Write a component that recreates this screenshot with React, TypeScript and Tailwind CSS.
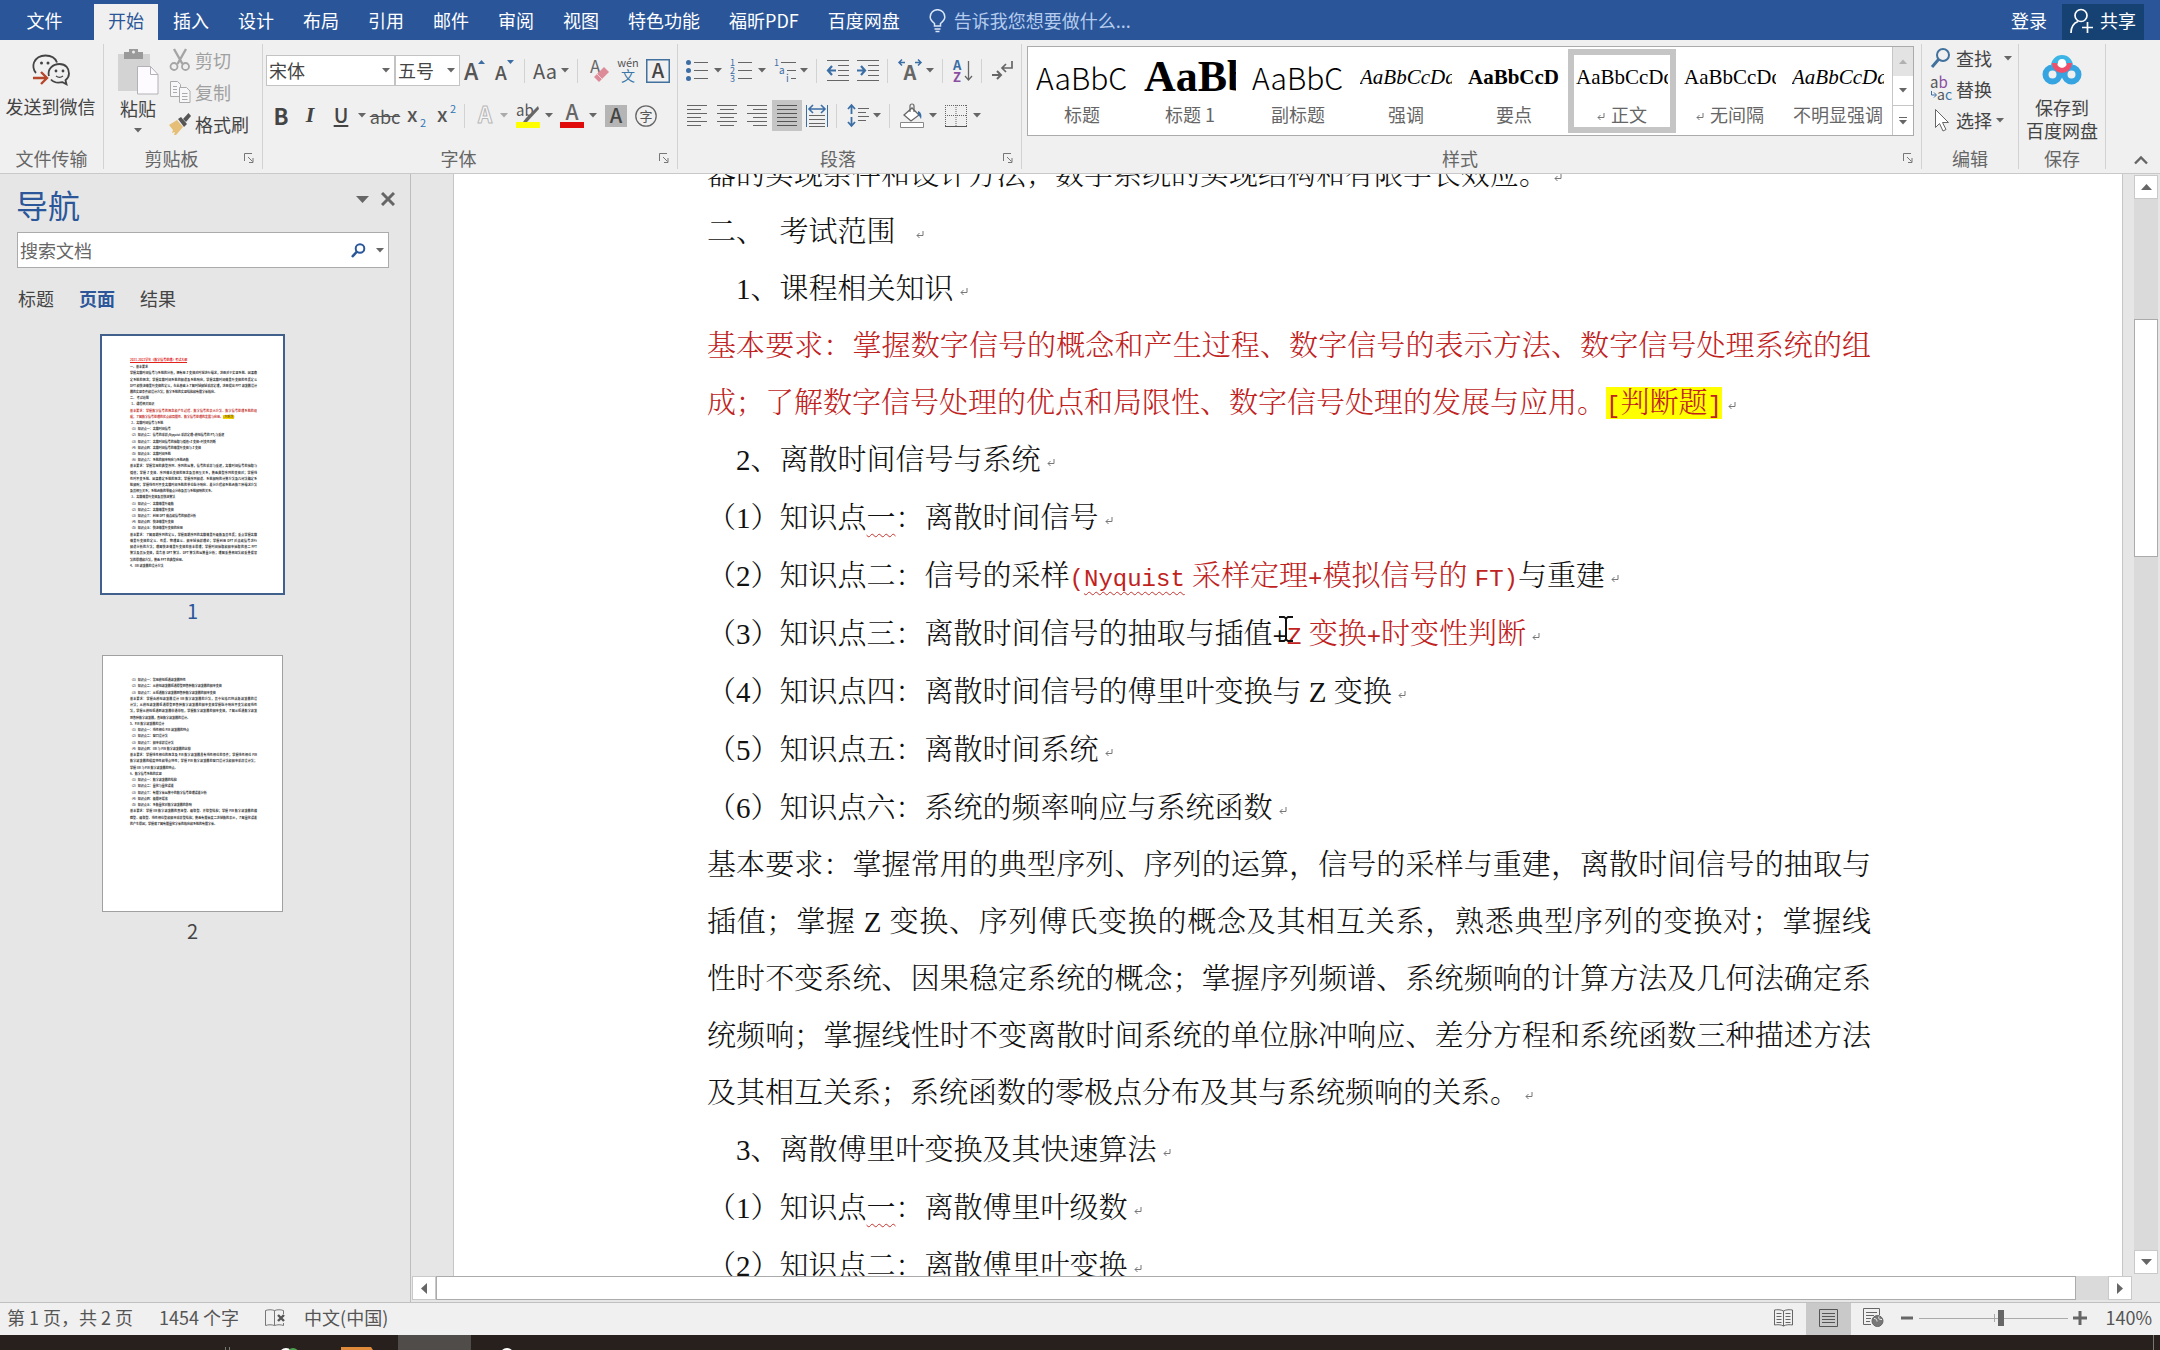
import React from "react";
import clsx from "clsx";

const tabs = ["插入", "设计", "布局", "引用", "邮件", "审阅", "视图", "特色功能", "福昕PDF", "百度网盘"];

const styleItems = [
  { name: "标题", sample: "AaBbC", cls: "text-[30px] font-light", mark: false },
  { name: "标题 1", sample: "AaBbC", cls: "text-[44px] font-bold font-['Liberation_Serif',serif]", mark: false },
  { name: "副标题", sample: "AaBbC", cls: "text-[30px] font-light", mark: false },
  { name: "强调", sample: "AaBbCcDd", cls: "text-[21px] italic text-[#333] font-['Liberation_Serif',serif]", mark: false },
  { name: "要点", sample: "AaBbCcD", cls: "text-[21px] font-bold font-['Liberation_Serif',serif]", mark: false },
  { name: "正文", sample: "AaBbCcDd", cls: "text-[21px] font-['Liberation_Serif',serif]", mark: true },
  { name: "无间隔", sample: "AaBbCcDd", cls: "text-[21px] font-['Liberation_Serif',serif]", mark: true },
  { name: "不明显强调", sample: "AaBbCcDd", cls: "text-[21px] italic text-[#555] font-['Liberation_Serif',serif]", mark: false },
];

type MiniLine = { t: string; full?: boolean; red?: boolean; title?: boolean; hl?: string };

const pageOne: MiniLine[] = [
  { t: "2021-2022学年《数字信号处理》考试大纲", title: true },
  { t: "一、基本要求" },
  { t: "掌握离散时间信号与系统的分析，拥有用 Z 变换对时域进行描述，进而对于实现系统、因果稳", full: true },
  { t: "定系统的概念；掌握离散时间系统的频谱及系统响应，掌握离散时间傅里叶变换的性质定义", full: true },
  { t: "DFT 和快速傅里叶变换的定义，在此基础上了解时域频域采样定理，进而提出 FFT 滤波器设计", full: true },
  { t: "器的实现条件和设计方法；数字系统的实现结构和有限字长效应。" },
  { t: "二、 考试范围" },
  { t: "  1、课程相关知识" },
  { t: "基本要求：掌握数字信号的概念和产生过程、数字信号的表示方法、数字信号处理系统的组", full: true, red: true },
  { t: "成；了解数字信号处理的优点和局限性、数字信号处理的发展与应用。", red: true, hl: "[判断题]" },
  { t: "  2、离散时间信号与系统" },
  { t: "（1）知识点一：离散时间信号" },
  { t: "（2）知识点二：信号的采样(Nyquist 采样定理+模拟信号的 FT)与重建" },
  { t: "（3）知识点三：离散时间信号的抽取与插值+Z 变换+时变性判断" },
  { t: "（4）知识点四：离散时间信号的傅里叶变换与 Z 变换" },
  { t: "（5）知识点五：离散时间系统" },
  { t: "（6）知识点六：系统的频率响应与系统函数" },
  { t: "基本要求：掌握常用的典型序列、序列的运算，信号的采样与重建，离散时间信号的抽取与", full: true },
  { t: "插值；掌握 Z 变换、序列傅氏变换的概念及其相互关系，熟悉典型序列的变换对；掌握线", full: true },
  { t: "性时不变系统、因果稳定系统的概念；掌握序列频谱、系统频响的计算方法及几何法确定系", full: true },
  { t: "统频响；掌握线性时不变离散时间系统的单位脉冲响应、差分方程和系统函数三种描述方法", full: true },
  { t: "及其相互关系；系统函数的零极点分布及其与系统频响的关系。" },
  { t: "  3、离散傅里叶变换及其快速算法" },
  { t: "（1）知识点一：离散傅里叶级数" },
  { t: "（2）知识点二：离散傅里叶变换" },
  { t: "（3）知识点三：利用 DFT 做连续信号的频谱分析" },
  { t: "（4）知识点四：快速傅里叶变换" },
  { t: "（5）知识点五：快速傅里叶变换的应用" },
  { t: "基本要求：了解周期序列的定义，掌握周期序列的离散傅里叶级数及其性质；重点掌握离散", full: true },
  { t: "傅里叶变换的定义、性质、物理意义、频率域抽样理论；掌握利用 DFT 对连续信号进行", full: true },
  { t: "频谱分析的方法；理解快速傅里叶变换的基本原理；掌握时间抽取和频率抽取的基二 FFT", full: true },
  { t: "算法及其反变换，混合基 DFT 算法、DFT 算法的运算量分析；理解重叠相加法和重叠保留", full: true },
  { t: "法的原理和方法，熟悉 FFT 的典型应用。" },
  { t: "4、IIR 滤波器的设计方法" },
];

const pageTwo: MiniLine[] = [
  { t: "（1）知识点一：常用模拟低通滤波器特性" },
  { t: "（2）知识点二：从模拟滤波器低通原型到各种数字滤波器的频率变换" },
  { t: "（3）知识点三：从低通数字滤波器到各种数字滤波器的频率变换" },
  { t: "基本要求：掌握由模拟滤波器设计 IIR 数字滤波器的方法，其中包括巴特沃斯滤波器的设", full: true },
  { t: "计法；从模拟滤波器低通原型到各种数字滤波器的频率变换掌握脉冲响应不变法和双线性", full: true },
  { t: "法，掌握从模拟低通到滤波器带通带阻，掌握数字滤波器的频率变换，了解从低通数字滤波", full: true },
  { t: "到各种数字滤波器，直接数字滤波器的设计。" },
  { t: "5、FIR 数字滤波器的设计" },
  { t: "（1）知识点一：线性相位 FIR 滤波器的特点" },
  { t: "（2）知识点二：窗口设计法" },
  { t: "（3）知识点三：频率采样设计法" },
  { t: "（4）知识点四：IIR 与 FIR 数字滤波器的比较" },
  { t: "基本要求：掌握线性相位的概念及 FIR 数字滤波器具有线性相位的条件；掌握线性相位 FIR", full: true },
  { t: "数字滤波器的幅度特性和零点特性；掌握 FIR 数字滤波器的窗口设计法和频率采样设计法；", full: true },
  { t: "掌握 IIR 与 FIR 数字滤波器的特点。" },
  { t: "6、数字信号系统的实现" },
  { t: "（1）知识点一：数字滤波器的结构" },
  { t: "（2）知识点二：量化与量化误差" },
  { t: "（3）知识点三：有限字长运算中的数字信号处理误差分析" },
  { t: "（4）知识点四：极限环振荡" },
  { t: "（5）知识点五：系数量化对数字滤波器的影响" },
  { t: "基本要求：掌握 IIR 数字滤波器的直接型、级联型、并联型结构；掌握 FIR 数字滤波器的横", full: true },
  { t: "截型、级联型、线性相位型和频率采样型结构；熟悉有限长度二进制数的表示，了解量化误差", full: true },
  { t: "的产生原因；掌握或了解有限量化字长的效应和系统的有限字长。" },
];

/* ---------- small shared parts ---------- */

const Arrow = ({ className }: { className?: string }) => (
  <svg width="8" height="5" viewBox="0 0 8 5" className={clsx("shrink-0", className)}>
    <path d="M0 0h8L4 4.6z" fill="#666" />
  </svg>
);

const Sep = ({ className }: { className?: string }) => (
  <div className={clsx("w-px h-6 shrink-0 bg-[#d2d2d2]", className)} />
);

const Divider = () => <div className="w-px shrink-0 mb-1 bg-[#d2d2d2]" />;

const IconButton = ({
  label,
  w = 22,
  className,
  children,
}: {
  label: string;
  w?: number;
  className?: string;
  children: React.ReactNode;
}) => (
  <button aria-label={label} className={clsx("shrink-0 flex items-center justify-center", className)}>
    <svg width={w} height="24" viewBox={`0 0 ${w} 24`} fill="none" className="overflow-visible">
      {children}
    </svg>
  </button>
);

const Lines = ({ rows, color = "#666" }: { rows: number[][]; color?: string }) => (
  <>
    {rows.map(([x1, x2, y], i) => (
      <path key={i} d={`M${x1} ${y + 0.5}H${x2}`} stroke={color} />
    ))}
  </>
);

const Launcher = ({ label }: { label: string }) => (
  <button aria-label={label} className="mr-2 shrink-0">
    <svg width="10" height="10" viewBox="0 0 10 10" fill="none" stroke="#777">
      <path d="M.5 8V.5H8M4 4l4.500 4.500M9 5v4.500H5" />
    </svg>
  </button>
);

const Group = ({
  label,
  launcher,
  className,
  children,
}: {
  label: string;
  launcher?: boolean;
  className?: string;
  children: React.ReactNode;
}) => (
  <section className={clsx("shrink-0 flex flex-col", className)}>
    <div className="flex-1">{children}</div>
    <div className="h-[27px] pb-[3px] flex items-center">
      <span className={clsx("flex-1 text-center leading-6 text-[#666]", launcher && "pr-[5px]")}>{label}</span>
      {launcher && <Launcher label={`${label}设置`} />}
    </div>
  </section>
);

const Return = ({ className }: { className?: string }) => (
  <svg width="8" height="8" viewBox="0 0 8 8" fill="none" stroke="#777" className={clsx("inline-block", className)}>
    <path d="M7 0v4.500H1M3.500 2L1 4.500 3.500 7" />
  </svg>
);

/* ---------- title tabs ---------- */

const TabBar = () => (
  <header className="h-10 shrink-0 bg-[#2a5699] flex items-end gap-px text-white">
    <button className="w-[93px] h-9 pr-1 pb-[3px]">文件</button>
    <button className="h-9 px-[14px] pb-[3px] bg-[#f0f0f0] text-[#2a5699]">开始</button>
    {tabs.map((t) => (
      <button key={t} className="h-9 px-[14px] pb-[3px]">
        {t}
      </button>
    ))}
    <label className="h-9 flex-1 pl-[14px] pb-[3px] flex items-center gap-2 text-[#b4cbee]">
      <svg width="17" height="24" viewBox="0 0 17 24" fill="none" stroke="#dbe7f8" strokeWidth="1.500">
        <path d="M5.500 17v-2.500C3 12.500 1.200 10.800 1.200 8a7.300 7.300 0 0 1 14.600 0c0 2.800-1.800 4.500-4.300 6.500V17zM5.500 20h6M6.500 22.500h4" />
      </svg>
      <input
        placeholder="告诉我您想要做什么..."
        className="flex-1 bg-transparent outline-none placeholder:text-[#b4cbee]"
      />
    </label>
    <button className="h-9 px-[14px] pb-[3px]">登录</button>
    <button className="h-9 w-[82px] mr-4 pb-[3px] bg-[#154273] flex items-center justify-center gap-[7px]">
      <svg width="23" height="26" viewBox="0 0 23 26" fill="none" stroke="#fff" strokeWidth="1.700">
        <circle cx="11" cy="7.500" r="6" />
        <path d="M1 25c0-6 3-10 7-11.500M17.500 14v11M12 19.500h11" />
      </svg>
      共享
    </button>
  </header>
);

/* ---------- ribbon ---------- */

const TransferGroup = () => (
  <Group label="文件传输" className="w-[103px]">
    <button className="w-full flex flex-col items-center gap-2 pt-[10px] pr-0.5">
      <svg width="38" height="32" viewBox="0 0 38 32" fill="none" stroke="#444" strokeWidth="1.800">
        <path d="M4 19C1 16 1 11 2 8.500 4 4 8.500 1.500 13.500 1.500c6 0 10 3 11.500 7" />
        <path d="M17 22c-2-7 4-12 10.500-12S37 14.500 37 19.500c0 3-1.500 5-3.500 6.700l1 4-4-2c-5 1-9 .3-11.500-2.700" />
        <path d="M1 24h13M9 18l6 6-6 6" stroke="#b7472a" strokeWidth="2.400" />
        <g fill="#444" stroke="none">
          <circle cx="9.500" cy="9" r="1.500" />
          <circle cx="16" cy="9" r="1.500" />
          <circle cx="24" cy="17" r="1.400" />
          <circle cx="31" cy="17" r="1.400" />
        </g>
        <path d="M24 22c2 1.500 5 1.500 7 0" strokeWidth="1.200" />
      </svg>
      <span className="leading-6 text-[#444]">发送到微信</span>
    </button>
  </Group>
);

const ClipboardGroup = () => (
  <Group label="剪贴板" launcher className="w-[158px]">
    <div className="flex">
      <button className="ml-3 w-[44px] flex flex-col items-center pt-1">
        <svg width="42" height="48" viewBox="0 0 42 48" fill="none">
          <path d="M1 6h32v37H1z" fill="#d3d3d3" />
          <path d="M7 4h5V1h9v3h5v7H7z" fill="#9a9a9a" />
          <circle cx="16.500" cy="4" r="1.500" fill="#eee" />
          <path d="M20.500 18.500h13l7.500 8V46H20.500z" fill="#fdfbff" stroke="#b3b0b6" />
          <path d="M33.500 18.500v8H41" stroke="#b3b0b6" />
        </svg>
        <span className="leading-6 text-[#444]">粘贴</span>
        <Arrow className="mt-2" />
      </button>
      <div className="ml-[9px] flex flex-col">
        <button className="h-8 flex items-center gap-1 text-[#a0a0a0]">
          <svg width="22" height="24" viewBox="0 0 22 24" fill="none" stroke="#a5a5a5">
            <path d="M5 1l8.500 15M17 1L8.500 16" strokeWidth="2.400" />
            <circle cx="5" cy="18.500" r="3.500" strokeWidth="1.800" />
            <circle cx="16.500" cy="18.500" r="3.500" strokeWidth="1.800" />
          </svg>
          剪切
        </button>
        <button className="h-8 flex items-center gap-1 text-[#a0a0a0]">
          <svg width="22" height="24" viewBox="0 0 22 24" fill="#f7f7f9" stroke="#aaa">
            <path d="M1.500 1.500h7l3 3v12h-10zM4 6.500h4M4 9.500h4M4 12.500h4" />
            <path d="M10.500 7.500h7l3.500 3.500v11.500H10.500zM13 13.500h5.500M13 16.500h5.500M13 19.500h5.500" />
          </svg>
          复制
        </button>
        <button className="h-8 flex items-center gap-1 text-[#444]">
          <svg width="22" height="24" viewBox="0 0 22 24">
            <path d="M0 13l8-5 6 7-7 8H5l1-3-3 1 1-3z" fill="#e5bf78" />
            <path d="M9 7l3-2 6 7-3 3z" fill="#555" />
            <path d="M14 7l5.500-6L22 4l-5 6z" fill="#555" />
          </svg>
          格式刷
        </button>
      </div>
    </div>
  </Group>
);

const Combo = ({ label, value, className }: { label: string; value: string; className: string }) => (
  <div className={clsx("relative h-[31px] shrink-0", className)}>
    <select
      aria-label={label}
      defaultValue={value}
      className="appearance-none w-full h-full pl-[2px] bg-white border border-[#c3c3c3] text-[#444] leading-[27px]"
    >
      <option>{value}</option>
    </select>
    <Arrow className="absolute right-[5px] top-[13px] pointer-events-none" />
  </div>
);

const FontGroup = () => (
  <Group label="字体" launcher className="w-[414px]">
    <div className="pt-[11px] pl-[3px] flex flex-col gap-[14px]">
      <div className="h-[31px] flex items-center">
        <Combo label="字体" value="宋体" className="w-[129px]" />
        <Combo label="字号" value="五号" className="w-[65px]" />
        <IconButton label="增大字号" className="ml-1" w={24}>
          <text x="0" y="21" fontSize="23" fontWeight="500" fill="#555">A</text>
          <path d="M14 5l3.500-4L21 5z" fill="#3b6ea5" />
        </IconButton>
        <IconButton label="减小字号" className="ml-[6px]" w={24}>
          <text x="1" y="21" fontSize="19" fontWeight="500" fill="#555">A</text>
          <path d="M13 1l3.500 4L20 1z" fill="#3b6ea5" />
        </IconButton>
        <Sep className="ml-[6px]" />
        <button aria-label="更改大小写" className="ml-2 w-6 text-[20px] leading-6 text-[#555] flex justify-center">
          Aa
        </button>
        <Arrow className="ml-1" />
        <Sep className="ml-2" />
        <IconButton label="清除格式" className="ml-3" w={20}>
          <text x="0" y="14" fontSize="17" fill="#666">A</text>
          <path d="M4 18L14 8l5 5L9 23z" fill="#dd8a99" />
          <path d="M7 15l5 5" stroke="#f3d3d9" />
        </IconButton>
        <IconButton label="拼音指南" className="ml-2" w={20}>
          <text x="10" y="8" fontSize="11" textAnchor="middle" fill="#555">wén</text>
          <text x="10" y="22" fontSize="14" textAnchor="middle" fill="#3b78a8">文</text>
        </IconButton>
        <IconButton label="字符边框" className="ml-2" w={24}>
          <path d="M.75 .75h22.500v22.500H.75z" stroke="#41719c" strokeWidth="1.500" />
          <text x="12" y="19" fontSize="20" fontWeight="500" textAnchor="middle" fill="#444">A</text>
        </IconButton>
      </div>
      <div className="h-[31px] flex items-center text-[#444]">
        <button className="w-[30px] pb-0.5 text-[22px] leading-6 font-bold">B</button>
        <button className="w-7 pb-0.5 text-[22px] leading-6 font-bold italic font-['Liberation_Serif',serif]">I</button>
        <button className="ml-1 w-[26px] pb-0.5 text-[20px] leading-6 font-medium underline underline-offset-2">U</button>
        <Arrow className="ml-1" />
        <button className="ml-[7px] w-6 flex justify-center leading-6 line-through text-[#555]">abc</button>
        <IconButton label="下标" className="ml-[10px]" w={20}>
          <text x="0" y="18" fontSize="20" fontWeight="500" fill="#555">x</text>
          <text x="13" y="23" fontSize="11" fill="#2e75b6">2</text>
        </IconButton>
        <IconButton label="上标" className="ml-[10px]" w={20}>
          <text x="0" y="18" fontSize="20" fontWeight="500" fill="#555">x</text>
          <text x="13" y="9" fontSize="11" fill="#2e75b6">2</text>
        </IconButton>
        <Sep className="ml-[7px]" />
        <IconButton label="文本效果" className="ml-[11px]" w={18}>
          <text x="9" y="19" fontSize="22" fontWeight="700" textAnchor="middle" fill="#f6f6f6" stroke="#b8b8b8">A</text>
        </IconButton>
        <Arrow className="ml-[6px] opacity-50" />
        <IconButton label="突出显示" className="ml-2" w={24}>
          <text x="0" y="12" fontSize="15" fill="#555">ab</text>
          <path d="M22 2l-12 12-3 4h4L23 5z" fill="#666" />
          <path d="M0 18h24v6H0z" fill="#ffff00" />
        </IconButton>
        <Arrow className="ml-[5px]" />
        <IconButton label="字体颜色" className="ml-[7px]" w={24}>
          <text x="12" y="16" fontSize="21" fontWeight="500" textAnchor="middle" fill="#666">A</text>
          <path d="M0 18h24v6H0z" fill="#e00b0b" />
        </IconButton>
        <Arrow className="ml-[5px]" />
        <IconButton label="字符底纹" className="ml-2" w={22}>
          <path d="M0 1h22v22H0z" fill="#b5b5b5" />
          <text x="11" y="19" fontSize="20" fontWeight="500" textAnchor="middle" fill="#444">A</text>
        </IconButton>
        <IconButton label="带圈字符" className="ml-2">
          <circle cx="11" cy="12" r="10.200" stroke="#666" strokeWidth="1.300" />
          <text x="11" y="17" fontSize="13" textAnchor="middle" fill="#555">字</text>
        </IconButton>
      </div>
    </div>
  </Group>
);

const ParagraphGroup = () => (
  <Group label="段落" launcher className="w-[343px]">
    <div className="pt-[11px] pl-2 flex flex-col gap-[14px]">
      <div className="h-[31px] flex items-center">
        <IconButton label="项目符号">
          {[3, 11, 19].map((y) => (
            <circle key={y} cx="2.500" cy={y + 0.5} r="2.500" fill="#3b6ea5" />
          ))}
          <Lines rows={[[8, 22, 3], [8, 22, 11], [8, 22, 19]]} />
        </IconButton>
        <Arrow className="ml-[6px]" />
        <IconButton label="编号" className="ml-2">
          {[1, 2, 3].map((n) => (
            <text key={n} x="0" y={n * 8 - 1} fontSize="9" fill="#3b6ea5">{n}</text>
          ))}
          <Lines rows={[[8, 22, 3], [8, 22, 11], [8, 22, 19]]} />
        </IconButton>
        <Arrow className="ml-[6px]" />
        <IconButton label="多级列表" className="ml-2">
          <text x="0" y="7" fontSize="9" fill="#3b6ea5">1</text>
          <text x="5" y="15" fontSize="10" fill="#3b6ea5">a</text>
          <text x="12" y="23" fontSize="10" fill="#3b6ea5">i</text>
          <Lines rows={[[7, 22, 3], [13, 22, 11], [17, 22, 19]]} />
        </IconButton>
        <Arrow className="ml-1" />
        <Sep className="ml-2" />
        <IconButton label="减少缩进" className="ml-[10px]">
          <Lines rows={[[0, 22, 1], [11, 22, 6], [11, 22, 11], [11, 22, 16], [0, 22, 21]]} />
          <path d="M9 11.500H1M5 7l-4 4.500L5 16" stroke="#3b6ea5" strokeWidth="2.200" />
        </IconButton>
        <IconButton label="增加缩进" className="ml-2">
          <Lines rows={[[0, 22, 1], [11, 22, 6], [11, 22, 11], [11, 22, 16], [0, 22, 21]]} />
          <path d="M0 11.500h8M4 7l4 4.500L4 16" stroke="#3b6ea5" strokeWidth="2.200" />
        </IconButton>
        <Sep className="ml-2" />
        <IconButton label="中文版式" className="ml-[10px]" w={24}>
          <text x="12" y="21" fontSize="20" fontWeight="700" textAnchor="middle" fill="#666">A</text>
          <path d="M7 3.500H1M4 .5l-3 3 3 3M17 3.500h6M20 .5l3 3-3 3" stroke="#3b6ea5" strokeWidth="1.500" />
        </IconButton>
        <Arrow className="ml-1" />
        <Sep className="ml-2" />
        <IconButton label="排序" className="ml-[10px]" w={20}>
          <text x="0" y="11" fontSize="13" fontWeight="700" fill="#3b6ea5">A</text>
          <text x="0" y="23" fontSize="13" fontWeight="700" fill="#8a4fa0">Z</text>
          <path d="M15.500 2v19M12 17l3.500 4 3.500-4" stroke="#666" strokeWidth="1.300" />
        </IconButton>
        <Sep className="ml-2" />
        <IconButton label="显示编辑标记" className="ml-[10px]">
          <path d="M20 2v7h-9M14 5l-4 4 4 4" stroke="#666" strokeWidth="1.700" />
          <path d="M0 16h9M5 12l4 4-4 4" stroke="#666" strokeWidth="2" />
        </IconButton>
      </div>
      <div className="h-[31px] flex items-center">
        <IconButton label="左对齐">
          <Lines rows={[[1, 21, 1], [1, 15, 5], [1, 21, 9], [1, 15, 13], [1, 21, 17], [1, 15, 21]]} />
        </IconButton>
        <IconButton label="居中" className="ml-2">
          <Lines rows={[[1, 21, 1], [4, 18, 5], [1, 21, 9], [4, 18, 13], [1, 21, 17], [4, 18, 21]]} />
        </IconButton>
        <IconButton label="右对齐" className="ml-2">
          <Lines rows={[[1, 21, 1], [7, 21, 5], [1, 21, 9], [7, 21, 13], [1, 21, 17], [7, 21, 21]]} />
        </IconButton>
        <IconButton label="两端对齐" className="ml-1 w-[30px] h-[31px] bg-[#c5c5c5]">
          <Lines
            rows={[[1, 21, 1], [1, 21, 5], [1, 21, 9], [1, 21, 13], [1, 21, 17], [1, 21, 21]]}
            color="#555"
          />
        </IconButton>
        <IconButton label="分散对齐" className="ml-1">
          <path d="M.5 1v22M21.500 1v22" stroke="#3b6ea5" />
          <path d="M3 5h16M7 1L3 5l4 4M15 1l4 4-4 4" stroke="#3b6ea5" strokeWidth="1.600" />
          <Lines rows={[[3, 19, 11], [3, 19, 15], [3, 19, 19], [3, 19, 22]]} />
        </IconButton>
        <Sep className="ml-2" />
        <IconButton label="行距" className="ml-[10px]">
          <path d="M4.500 1v9M1 5l3.500-4L8 5M4.500 13v9M1 18l3.500 4L8 18" stroke="#3b6ea5" strokeWidth="1.800" />
          <Lines rows={[[11, 22, 4], [11, 19, 8], [11, 22, 12], [11, 19, 16]]} />
        </IconButton>
        <Arrow className="ml-1" />
        <Sep className="ml-2" />
        <IconButton label="底纹" className="ml-[10px]" w={24}>
          <path d="M4 11l8-7 7 7-8 6z" fill="#fff" stroke="#666" strokeWidth="1.300" />
          <path d="M10 8V2a2 2 0 0 1 4 0v6" stroke="#666" strokeWidth="1.200" />
          <path d="M18 7c3 1 4 4 3 8l-3-5z" fill="#3b6ea5" />
          <path d="M.5 18.500h23v5H.5z" fill="#fff" stroke="#888" />
        </IconButton>
        <Arrow className="ml-[5px]" />
        <IconButton label="边框" className="ml-2">
          <path d="M.5 1v21M21.500 1v21M11 1v21M0 1.500h22M0 11.500h22" stroke="#666" strokeDasharray="1 1" />
          <path d="M0 22.500h22" stroke="#555" />
        </IconButton>
        <Arrow className="ml-[6px]" />
      </div>
    </div>
  </Group>
);

const StylesGroup = () => (
  <Group label="样式" launcher className="flex-1">
    <div className="mt-0.5 ml-[5px] mr-[7px] h-[90px] flex border border-[#ababab] bg-white">
      {styleItems.map((s, i) => (
        <button
          key={s.name}
          className={clsx(
            "flex-1 my-0.5 overflow-hidden border-[6px] flex flex-col items-center",
            i === 5 ? "border-[#c5c5c5]" : "border-transparent"
          )}
        >
          <span
            className={clsx(
              "w-[92px] h-11 shrink-0 overflow-hidden whitespace-nowrap text-left leading-[44px] text-black",
              s.cls
            )}
          >
            {s.sample}
          </span>
          <span className="mt-[3px] leading-6 whitespace-nowrap text-[#666]">
            {s.mark && <Return className="mr-[6px]" />}
            {s.name}
          </span>
        </button>
      ))}
      <div className="w-[21px] shrink-0 border-l border-[#c6c6c6] flex flex-col">
        <button aria-label="上一行" className="flex-1 bg-[#e3e3e3] flex items-center justify-center">
          <Arrow className="rotate-180 opacity-40" />
        </button>
        <button aria-label="下一行" className="flex-1 flex items-center justify-center">
          <Arrow />
        </button>
        <button
          aria-label="其他样式"
          className="flex-1 border-t border-[#c6c6c6] flex flex-col items-center justify-center gap-0.5"
        >
          <span className="w-2 h-px bg-[#666]" />
          <Arrow />
        </button>
      </div>
    </div>
  </Group>
);

const EditGroup = () => (
  <Group label="编辑" className="w-[96px]">
    <div className="pl-2 text-[#444]">
      <button className="h-[31px] pb-[3px] flex items-center gap-1">
        <svg width="22" height="22" viewBox="0 0 22 22" fill="none" stroke="#41719c" strokeWidth="2">
          <circle cx="13" cy="8" r="6" />
          <path d="M8.500 12.500L2 20" strokeWidth="3" />
        </svg>
        查找
        <Arrow className="ml-2" />
      </button>
      <button className="h-[31px] pb-[3px] flex items-center gap-1">
        <svg width="22" height="24" viewBox="0 0 22 24" fill="none" className="overflow-visible">
          <text x="0" y="11" fontSize="15" fill="#555">
            a<tspan fill="#8a4fa0">b</tspan>
          </text>
          <text x="7" y="23" fontSize="14" fill="#555">
            a<tspan fill="#3b78a8">c</tspan>
          </text>
          <path d="M1.500 14v4H6M4 15.500L6.500 18 4 20.500" stroke="#3b6ea5" />
        </svg>
        替换
      </button>
      <button className="h-[31px] pb-[3px] flex items-center gap-1">
        <svg width="22" height="24" viewBox="0 0 22 24" fill="#fff" stroke="#666">
          <path d="M5.500 1.500v18l4-4 3.500 7.500 3-1.500-3.500-7h6z" />
        </svg>
        选择
        <Arrow />
      </button>
    </div>
  </Group>
);

const SaveGroup = () => (
  <Group label="保存" className="w-[86px]">
    <button className="w-full flex flex-col items-center pt-[7px] text-[#444]">
      <svg width="40" height="35" viewBox="0 0 40 35" fill="none" strokeWidth="6">
        <circle cx="10.500" cy="23.500" r="7" stroke="#35a4e0" />
        <circle cx="29.500" cy="23.500" r="7" stroke="#35a4e0" />
        <path d="M12 15a8 8 0 1 1 16 0" stroke="#3cb4e5" />
        <path d="M12.500 12a7.500 7.500 0 0 0 15 0" stroke="#ef4f6b" strokeWidth="5" />
        <circle cx="20" cy="12" r="4" fill="#fff" stroke="none" />
      </svg>
      <span className="mt-[9px] leading-6">保存到</span>
      <span className="leading-[22px]">百度网盘</span>
    </button>
  </Group>
);

const Ribbon = () => (
  <div className="h-[134px] shrink-0 pt-1 flex bg-[#f0f0f0] border-b border-[#c9c9c9]">
    <TransferGroup />
    <Divider />
    <ClipboardGroup />
    <Divider />
    <FontGroup />
    <Divider />
    <ParagraphGroup />
    <Divider />
    <StylesGroup />
    <Divider />
    <EditGroup />
    <Divider />
    <SaveGroup />
    <Divider />
    <div className="w-[54px] shrink-0 flex items-end justify-end pr-3 pb-2">
      <button aria-label="折叠功能区">
        <svg width="14" height="10" viewBox="0 0 14 10" fill="none" stroke="#666" strokeWidth="2.400">
          <path d="M1 8.500l6-6 6 6" />
        </svg>
      </button>
    </div>
  </div>
);

/* ---------- navigation pane ---------- */

const MiniPage = ({ lines, className }: { lines: MiniLine[]; className: string }) => (
  <div
    className={clsx(
      "w-[127px] flex flex-col justify-between text-[3px] leading-[4px] font-bold text-[#333] text-left",
      className
    )}
  >
    {lines.map((l, i) => (
      <p
        key={i}
        className={clsx(
          "whitespace-pre",
          l.full && "[text-align-last:justify]",
          l.red && "text-[#c8322d]",
          l.title && "self-start text-[#e0201b] border-b border-[#e0201b]"
        )}
      >
        {l.t}
        {l.hl && <span className="bg-[#ffe600] text-[#8a5a00]">{l.hl}</span>}
      </p>
    ))}
  </div>
);

const NavPane = () => (
  <aside className="w-[411px] shrink-0 bg-[#e6e6e6] border-r border-[#bdbdbd]">
    <div className="h-[58px] pl-4 pr-[15px] flex justify-between">
      <h2 className="pt-[7px] text-[32px] leading-[46px] text-[#2b579a]">导航</h2>
      <div className="h-[50px] flex items-center gap-3">
        <button aria-label="任务窗格选项">
          <svg width="13" height="7" viewBox="0 0 13 7">
            <path d="M0 0h13L6.500 7z" fill="#666" />
          </svg>
        </button>
        <button aria-label="关闭">
          <svg width="14" height="14" viewBox="0 0 14 14" stroke="#666" strokeWidth="3">
            <path d="M1 1l12 12M13 1L1 13" />
          </svg>
        </button>
      </div>
    </div>
    <label className="ml-[17px] mr-[21px] h-9 pl-0.5 pr-1 flex items-center bg-white border border-[#ababab]">
      <input placeholder="搜索文档" className="flex-1 min-w-0 outline-none placeholder:text-[#666]" />
      <svg width="15" height="15" viewBox="0 0 15 15" fill="none" stroke="#2b579a" strokeWidth="2">
        <circle cx="9" cy="5.500" r="4.300" />
        <path d="M6 8.500L1 14" strokeWidth="2.600" />
      </svg>
      <Arrow className="ml-[10px]" />
    </label>
    <nav className="mt-[17px] ml-[18px] flex gap-[25px] leading-[26px] text-[#444]">
      <button>标题</button>
      <button className="font-bold text-[#2b579a]">页面</button>
      <button>结果</button>
    </nav>
    <div className="mt-[23px] pr-[25px] flex flex-col items-center text-[20px] leading-6">
      <button className="w-[185px] h-[261px] border-2 border-[#41618c] bg-white pl-7 flex">
        <MiniPage lines={pageOne} className="mt-[22px] h-[210px]" />
      </button>
      <span className="mt-1 text-[#2b579a]">1</span>
      <button className="mt-8 w-[181px] h-[257px] border border-[#a0a0a0] bg-white pl-[27px] flex">
        <MiniPage lines={pageTwo} className="mt-[22px] h-[148px]" />
      </button>
      <span className="mt-[7px] text-[#444]">2</span>
    </div>
  </aside>
);

/* ---------- document ---------- */

const Full = ({ children }: { children: React.ReactNode }) => (
  <span className="block whitespace-nowrap [text-align-last:justify]">{children}</span>
);

const Mono = ({ children }: { children: React.ReactNode }) => (
  <span className="font-['Liberation_Mono',monospace] text-[24px] leading-none">{children}</span>
);

const Wavy = ({ children }: { children: React.ReactNode }) => (
  <span className="underline decoration-wavy decoration-1 decoration-[#c8322d] underline-offset-[5px]">
    {children}
  </span>
);

const Heading = ({ children }: { children: React.ReactNode }) => (
  <p className="pl-[29px]">
    {children}
    <Return className="ml-[6px]" />
  </p>
);

const Item = ({ n, cn, wavy, children }: { n: number; cn: string; wavy?: boolean; children: React.ReactNode }) => (
  <p className="h-[58px] leading-[58px] whitespace-nowrap">
    （{n}）知识点{wavy ? <Wavy>{cn}</Wavy> : cn}：{children}
    <Return className="ml-[6px]" />
  </p>
);

const Document = () => (
  <article className="flex-1 min-w-0 ml-[42px] mr-[11px] overflow-hidden bg-white border-x border-[#c6c6c6]">
    <div className="-mt-[27px] ml-[253px] w-[1164px] whitespace-pre-wrap text-[29px] leading-[57px] text-[#111] font-light font-['Liberation_Serif','Noto_Serif_CJK_SC','Noto_Sans_CJK_SC',serif]">
      <p>
        器的实现条件和设计方法；数字系统的实现结构和有限字长效应。
        <Return className="ml-[6px]" />
      </p>
      <p>
        {"二、  考试范围  "}
        <Return className="ml-[6px]" />
      </p>
      <Heading>1、课程相关知识</Heading>
      <p className="text-[#c0231e]">
        <Full>基本要求：掌握数字信号的概念和产生过程、数字信号的表示方法、数字信号处理系统的组</Full>
        成；了解数字信号处理的优点和局限性、数字信号处理的发展与应用。
        <span className="bg-[#ffff00]">
          <Mono>[</Mono>判断题<Mono>]</Mono>
        </span>
        <Return className="ml-[6px]" />
      </p>
      <Heading>2、离散时间信号与系统</Heading>
      <Item n={1} cn="一" wavy>离散时间信号</Item>
      <Item n={2} cn="二">
        信号的采样
        <span className="text-[#c0231e]">
          <Mono>(</Mono>
          <Wavy>
            <Mono>Nyquist</Mono>
          </Wavy>
          {" 采样定理"}
          <Mono>+</Mono>
          {"模拟信号的 "}
          <Mono>FT)</Mono>
        </span>
        与重建
      </Item>
      <Item n={3} cn="三">
        离散时间信号的抽取与插值<Mono>+</Mono>
        <span className="relative text-[#c0231e]">
          {/* text cursor */}
          <svg
            width="14"
            height="26"
            viewBox="0 0 14 26"
            fill="none"
            stroke="#111"
            strokeWidth="2"
            className="absolute -left-2 -top-0.5"
          >
            <path d="M0 1h5l2 1.500L9 1h5M7 2v22M0 25h5l2-1.500L9 25h5" />
          </svg>
          <Mono>Z</Mono>
          {" 变换"}
          <Mono>+</Mono>时变性判断
        </span>
      </Item>
      <Item n={4} cn="四">离散时间信号的傅里叶变换与 Z 变换</Item>
      <Item n={5} cn="五">离散时间系统</Item>
      <Item n={6} cn="六">系统的频率响应与系统函数</Item>
      <p>
        <Full>基本要求：掌握常用的典型序列、序列的运算，信号的采样与重建，离散时间信号的抽取与</Full>
        <Full>插值；掌握 Z 变换、序列傅氏变换的概念及其相互关系，熟悉典型序列的变换对；掌握线</Full>
        <Full>性时不变系统、因果稳定系统的概念；掌握序列频谱、系统频响的计算方法及几何法确定系</Full>
        <Full>统频响；掌握线性时不变离散时间系统的单位脉冲响应、差分方程和系统函数三种描述方法</Full>
        及其相互关系；系统函数的零极点分布及其与系统频响的关系。
        <Return className="ml-[6px]" />
      </p>
      <Heading>3、离散傅里叶变换及其快速算法</Heading>
      <Item n={1} cn="一" wavy>离散傅里叶级数</Item>
      <Item n={2} cn="二">离散傅里叶变换</Item>
    </div>
  </article>
);

const scrollBtn = "w-6 h-6 shrink-0 bg-white border border-[#c9c9c9] flex items-center justify-center";

const Tri = ({ d, w, h }: { d: string; w: number; h: number }) => (
  <svg width={w} height={h} viewBox={`0 0 ${w} ${h}`}>
    <path d={d} fill="#666" />
  </svg>
);

const Workspace = () => (
  <main className="flex-1 min-w-0 flex flex-col bg-[#e6e6e6]">
    <div className="flex-1 min-h-0 flex">
      <Document />
      <div className="w-[26px] shrink-0 pt-px pb-0.5 pr-0.5 flex flex-col">
        <button aria-label="向上滚动" className={scrollBtn}>
          <Tri w={11} h={6} d="M0 6h11L5.500 0z" />
        </button>
        <div className="flex-1 w-6 bg-[#dadada] pt-[120px]">
          <div className="h-[238px] bg-white border border-[#ababab]" />
        </div>
        <button aria-label="向下滚动" className={scrollBtn}>
          <Tri w={11} h={6} d="M0 0h11L5.500 6z" />
        </button>
      </div>
    </div>
    <div className="h-[26px] shrink-0 pl-px pr-7 flex">
      <button aria-label="向左滚动" className={scrollBtn}>
        <Tri w={6} h={11} d="M6 0v11L0 5.500z" />
      </button>
      <div className="flex-1 h-6 bg-[#dadada] pr-8">
        <div className="h-full bg-white border border-[#ababab]" />
      </div>
      <button aria-label="向右滚动" className={scrollBtn}>
        <Tri w={6} h={11} d="M0 0v11l6-5.500z" />
      </button>
    </div>
  </main>
);

/* ---------- status bar and taskbar ---------- */

const StatusBar = () => (
  <footer className="h-[33px] shrink-0 pl-[7px] pr-2 pb-[3px] flex items-center bg-[#f0f0f0] border-t border-[#c0c0c0] leading-[29px] text-[#555]">
    <span>第 1 页，共 2 页</span>
    <span className="ml-[26px]">1454 个字</span>
    <svg width="22" height="20" viewBox="0 0 22 20" fill="none" stroke="#777" className="ml-[25px]">
      <path d="M10.500 2.500c-3-1-6-1-9 0v15c3-1 6-1 9 0zM10.500 2.500c3-1 6-1 9 0V6M10.500 17.500c3-1 6-1 9 0V15" />
      <path d="M14 7l6 6M20 7l-6 6" stroke="#555" strokeWidth="2.400" />
    </svg>
    <span className="ml-[18px]">中文(中国)</span>
    <div className="flex-1" />
    <button aria-label="阅读视图">
      <svg width="20" height="18" viewBox="0 0 20 18" fill="none" stroke="#666">
        <path d="M9.500 2C7 .5 3 .5.500 1v15c3-.5 6.500-.5 9 1 2.500-1.500 6-1.500 9-1V1c-2.500-.5-6.500-.5-9 1v15" />
        <path d="M2.500 4.500h5M2.500 7.500h5M2.500 10.500h5M2.500 13.500h5M11.500 4.500h5M11.500 7.500h5M11.500 10.500h5M11.500 13.500h5" />
      </svg>
    </button>
    <button
      aria-label="页面视图"
      className="ml-3 -mb-[3px] w-[45px] h-8 pb-[3px] bg-[#c9c9c9] flex items-center justify-center"
    >
      <svg width="19" height="18" viewBox="0 0 19 18" fill="none" stroke="#555">
        <path d="M.5.5h18v17H.5zM3 4.500h13M3 7.500h13M3 10.500h13M3 13.500h13" />
      </svg>
    </button>
    <button aria-label="Web 版式视图" className="ml-3">
      <svg width="21" height="19" viewBox="0 0 21 19" fill="none" stroke="#666">
        <path d="M8 16.500H.5V.5h16V7M3 4.500h11M3 7.500h8M3 10.500h5M3 13.500h4" />
        <circle cx="14.500" cy="13" r="5.500" fill="#777" />
        <path d="M11 10.500c2 0 3 1 3 3M16 8.500c-1 2 0 3 3 3" stroke="#eee" />
      </svg>
    </button>
    <button aria-label="缩小" className="ml-[17px]">
      <svg width="12" height="12" viewBox="0 0 12 12">
        <path d="M0 4.500h12v3H0z" fill="#666" />
      </svg>
    </button>
    <div className="relative ml-[6px] w-[149px] h-5 flex items-center">
      <span className="absolute left-0 right-0 top-[10px] h-px bg-[#aaa]" />
      <span className="absolute left-1/2 top-[6px] w-px h-2 bg-[#aaa]" />
      <input
        type="range"
        aria-label="缩放"
        min={0}
        max={100}
        defaultValue={55}
        className="relative w-full h-5 appearance-none bg-transparent [&::-webkit-slider-thumb]:appearance-none [&::-webkit-slider-thumb]:w-[6px] [&::-webkit-slider-thumb]:h-4 [&::-webkit-slider-thumb]:bg-[#666]"
      />
    </div>
    <button aria-label="放大" className="ml-[5px]">
      <svg width="14" height="14" viewBox="0 0 14 14">
        <path d="M0 5.500h5.500V0h3v5.500H14v3H8.500V14h-3V8.500H0z" fill="#666" />
      </svg>
    </button>
    <button className="ml-[18px]">140%</button>
  </footer>
);

const Taskbar = () => (
  <div className="relative h-[15px] shrink-0 overflow-hidden bg-[#27201c]">
    <div className="absolute left-[398px] top-0 w-[73px] h-full bg-[#504c49]" />
    <svg width="540" height="15" viewBox="0 0 540 15" className="absolute left-0 top-0">
      <circle cx="286" cy="20" r="7" fill="#fff" />
      <circle cx="293" cy="19" r="6" fill="#4ea34e" />
      <path d="M341 12h30l2 3h-32z" fill="#e08a3c" />
      <circle cx="507" cy="20" r="7" fill="#fff" />
      <path d="M225.500 12v3M229.500 12v3" stroke="#777" />
    </svg>
    <div className="absolute right-[6px] top-0 w-px h-full bg-[#777]" />
  </div>
);

export default function App() {
  return (
    <div
      lang="zh-CN"
      className="h-screen flex flex-col overflow-hidden text-[18px] font-['Noto_Sans_CJK_SC',sans-serif]"
    >
      <TabBar />
      <Ribbon />
      <div className="flex-1 min-h-0 flex">
        <NavPane />
        <Workspace />
      </div>
      <StatusBar />
      <Taskbar />
    </div>
  );
}
